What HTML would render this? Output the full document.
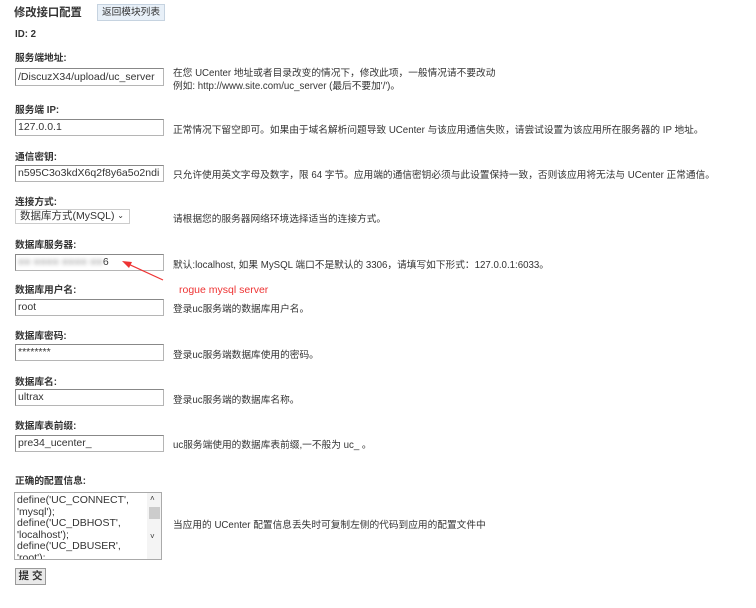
<!DOCTYPE html>
<html><head><meta charset="utf-8"><style>
body{margin:0;width:756px;height:608px;background:#fff;font-family:"Liberation Sans","Noto Sans CJK SC",sans-serif;font-size:9.7px;color:#333;position:relative;overflow:hidden}
.a{position:absolute;white-space:nowrap}
.l{font-weight:bold;color:#333;font-size:9.7px}
.i{position:absolute;left:15px;width:145px;height:15px;border:1px solid #b5b5b5;border-top-color:#888;border-left-color:#888;font-size:10.5px;line-height:15px;padding-left:2px;color:#333;overflow:hidden;white-space:nowrap;box-sizing:content-box}
.d{position:absolute;left:173px;white-space:nowrap;color:#333;font-size:9.7px}
</style></head><body>
<div class="a l" style="left:14px;top:4px;font-size:11.3px">修改接口配置</div>
<div class="a" style="left:97px;top:4px;width:68px;height:17px;background:#e8f0f8;border:1px solid #c6d3e0;box-sizing:border-box;text-align:center;line-height:15px;font-size:9.7px">返回模块列表</div>
<div class="a l" style="left:15px;top:29px">ID: 2</div>
<div class="a l" style="left:15px;top:50px">服务端地址:</div>
<div class="i" style="top:68px;height:16px;line-height:16px">/DiscuzX34/upload/uc_server</div>
<div class="d" style="top:67px;line-height:13px">在您 UCenter 地址或者目录改变的情况下，修改此项，一般情况请不要改动<br>例如: http://www.site.com/uc_server (最后不要加'/')。</div>
<div class="a l" style="left:15px;top:102px">服务端 IP:</div>
<div class="i" style="top:119px">127.0.0.1</div>
<div class="d" style="top:122px">正常情况下留空即可。如果由于域名解析问题导致 UCenter 与该应用通信失败，请尝试设置为该应用所在服务器的 IP 地址。</div>
<div class="a l" style="left:15px;top:149px">通信密钥:</div>
<div class="i" style="top:165px">n595C3o3kdX6q2f8y6a5o2ndi</div>
<div class="d" style="top:167px">只允许使用英文字母及数字，限 64 字节。应用端的通信密钥必须与此设置保持一致，否则该应用将无法与 UCenter 正常通信。</div>
<div class="a l" style="left:15px;top:194px">连接方式:</div>
<div class="a" style="left:15px;top:209px;width:115px;height:15px;border:1px solid #ccc;box-sizing:border-box;font-size:10.5px;line-height:13px;padding-left:4px">数据库方式(MySQL)<span style="position:absolute;right:5px;top:-1px;font-size:8px">&#8964;</span></div>
<div class="d" style="top:211px">请根据您的服务器网络环境选择适当的连接方式。</div>
<div class="a l" style="left:15px;top:237px">数据库服务器:</div>
<div class="i" style="top:254px"><span style="color:#ccc;filter:blur(2px)">■■ ■■■■ ■■■■ ■■</span>6</div>
<div class="d" style="top:257px">默认:localhost, 如果 MySQL 端口不是默认的 3306，请填写如下形式：127.0.0.1:6033。</div>
<svg class="a" style="left:118px;top:258px" width="50" height="25"><line x1="45" y1="22" x2="8" y2="5" stroke="#e33" stroke-width="1.2"/><polygon points="4,3 14,4 11,10" fill="#e33"/></svg>
<div class="a" style="left:179px;top:284px;color:#e33;font-size:10.5px">rogue mysql server</div>
<div class="a l" style="left:15px;top:282px">数据库用户名:</div>
<div class="i" style="top:299px">root</div>
<div class="d" style="top:301px">登录uc服务端的数据库用户名。</div>
<div class="a l" style="left:15px;top:328px">数据库密码:</div>
<div class="i" style="top:344px">********</div>
<div class="d" style="top:347px">登录uc服务端数据库使用的密码。</div>
<div class="a l" style="left:15px;top:374px">数据库名:</div>
<div class="i" style="top:389px">ultrax</div>
<div class="d" style="top:392px">登录uc服务端的数据库名称。</div>
<div class="a l" style="left:15px;top:418px">数据库表前缀:</div>
<div class="i" style="top:435px">pre34_ucenter_</div>
<div class="d" style="top:437px">uc服务端使用的数据库表前缀,一不般为 uc_ 。</div>
<div class="a l" style="left:15px;top:473px">正确的配置信息:</div>
<div class="a" style="left:14px;top:492px;width:148px;height:68px;border:1px solid #aaa;box-sizing:border-box;overflow:hidden;font-size:10.5px;line-height:11.5px;padding:2px 0 0 2px">define('UC_CONNECT',<br>'mysql');<br>define('UC_DBHOST',<br>'localhost');<br>define('UC_DBUSER',<br>'root');
<div style="position:absolute;right:0;top:0;width:14px;height:66px;background:#f4f4f4"><div style="position:absolute;top:14px;left:2px;width:11px;height:12px;background:#ccc"></div><div style="position:absolute;top:0;left:3px;font-size:8px">˄</div><div style="position:absolute;top:38px;left:3px;font-size:8px">˅</div></div></div>
<div class="d" style="top:517px">当应用的 UCenter 配置信息丢失时可复制左侧的代码到应用的配置文件中</div>
<div class="a" style="left:15px;top:568px;width:31px;height:17px;background:#e9e9e9;border:1px solid #999;box-sizing:border-box;text-align:center;line-height:15px;font-weight:bold;font-size:10.5px">提 交</div>
</body></html>
